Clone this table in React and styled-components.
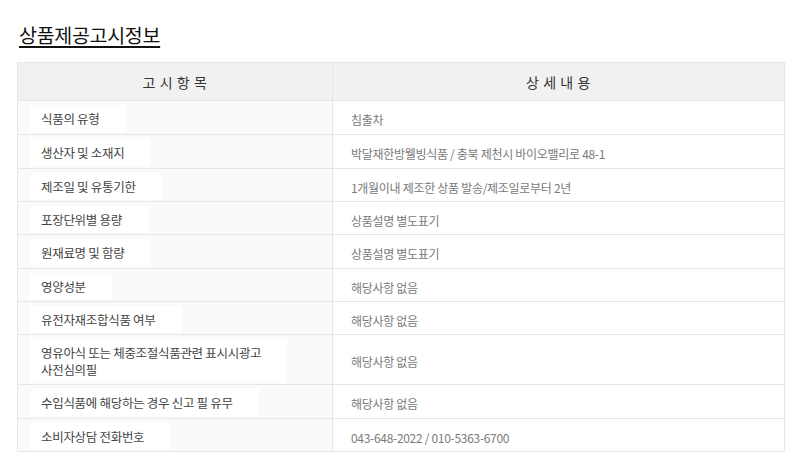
import React from 'react';
import styled, { createGlobalStyle } from 'styled-components';

const GlobalStyle = createGlobalStyle`
  html, body {
    margin: 0;
    padding: 0;
    background: #fff;
  }
  body {
    font-family: "Noto Sans CJK KR", "Noto Sans", sans-serif;
  }
`;

const borderColor = '#e6e6e6';

const Wrapper = styled.div`
  padding: 22px 15px 0 17px;
  width: 768px;
`;

const Title = styled.h2`
  margin: 0 0 14px 2px;
  font-size: 19.5px;
  line-height: 26px;
  font-weight: 400;
  color: #111;
  letter-spacing: -0.3px;
  text-decoration: underline;
  text-underline-offset: 3px;
  text-decoration-thickness: 2px;
`;

const Table = styled.table`
  width: 768px;
  border-collapse: collapse;
  table-layout: fixed;
  border: 1px solid ${borderColor};
`;

const HeadCell = styled.th`
  height: 36px;
  padding: 1px 0 0;
  background: #f1f1f1;
  border: 1px solid ${borderColor};
  font-size: 14px;
  font-weight: 400;
  color: #333;
  text-align: center;
  vertical-align: middle;
  line-height: 18px;
  letter-spacing: 0.6px;
`;

const LabelCell = styled.td`
  width: 314px;
  height: ${(p) => p.$h}px;
  padding: 2px 12px 0 12px;
  background: #fafafa;
  border: 1px solid ${borderColor};
  vertical-align: middle;
`;

const Label = styled.div`
  width: fit-content;
  padding: 5px 26px 5px 11px;
  background: #fff;
  font-size: 12.5px;
  line-height: 17px;
  letter-spacing: -0.3px;
  color: #444;
`;

const ValueCell = styled.td`
  padding: 4px 18px 0 18px;
  border: 1px solid ${borderColor};
  vertical-align: middle;
  font-size: 12px;
  line-height: 17px;
  letter-spacing: -0.3px;
  color: #7a7a7a;
`;

const rows = [
  { label: '식품의 유형', value: '침출차', h: 31 },
  { label: '생산자 및 소재지', value: '박달재한방웰빙식품 / 충북 제천시 바이오밸리로 48-1', h: 31 },
  { label: '제조일 및 유통기한', value: '1개월이내 제조한 상품 발송/제조일로부터 2년', h: 30 },
  { label: '포장단위별 용량', value: '상품설명 별도표기', h: 30 },
  { label: '원재료명 및 함량', value: '상품설명 별도표기', h: 31 },
  { label: '영양성분', value: '해당사항 없음', h: 30 },
  { label: '유전자재조합식품 여부', value: '해당사항 없음', h: 30 },
  { label: ['영유아식 또는 체중조절식품관련 표시시광고', '사전심의필'], value: '해당사항 없음', h: 47 },
  { label: '수입식품에 해당하는 경우 신고 필 유무', value: '해당사항 없음', h: 31 },
  { label: '소비자상담 전화번호', value: '043-648-2022 / 010-5363-6700', h: 30 },
];

export default function App() {
  return (
    <Wrapper>
      <GlobalStyle />
      <Title>상품제공고시정보</Title>
      <Table>
        <thead>
          <tr>
            <HeadCell style={{ width: 314 }}>고 시 항 목</HeadCell>
            <HeadCell>상 세 내 용</HeadCell>
          </tr>
        </thead>
        <tbody>
          {rows.map((row, i) => (
            <tr key={i}>
              <LabelCell $h={row.h}>
                <Label>
                  {Array.isArray(row.label)
                    ? row.label.map((line, j) => (
                      <React.Fragment key={j}>
                        {j > 0 && <br />}
                        {line}
                      </React.Fragment>
                    ))
                    : row.label}
                </Label>
              </LabelCell>
              <ValueCell>{row.value}</ValueCell>
            </tr>
          ))}
        </tbody>
      </Table>
    </Wrapper>
  );
}
